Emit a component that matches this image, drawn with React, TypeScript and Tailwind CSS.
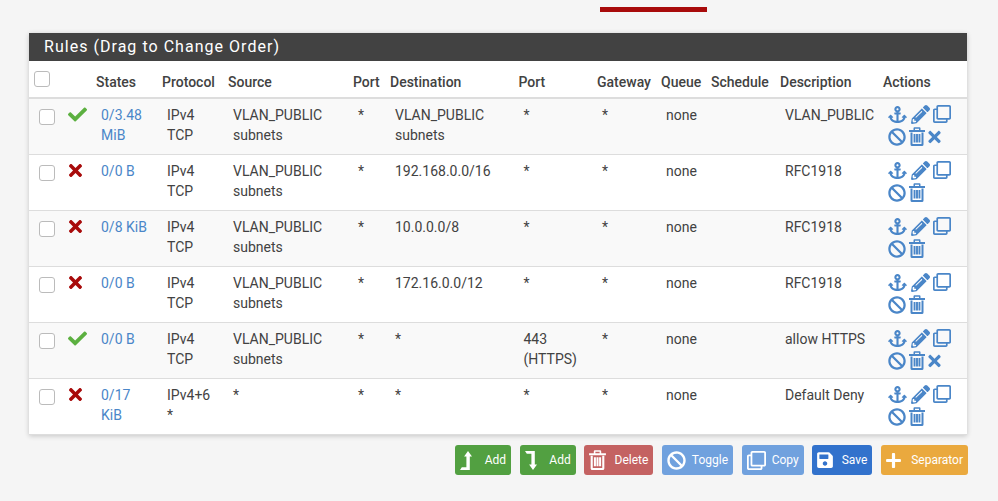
import { FaAnchor, FaPencilAlt, FaRegClone, FaBan, FaTimes, FaCheck, FaSave, FaPlus } from "react-icons/fa";

const rules = [
  { ok: true, states: "0/3.48 MiB", proto: ["IPv4", "TCP"], src: ["VLAN_PUBLIC", "subnets"], dest: ["VLAN_PUBLIC", "subnets"], port: "*", desc: "VLAN_PUBLIC", del: true },
  { ok: false, states: "0/0 B", proto: ["IPv4", "TCP"], src: ["VLAN_PUBLIC", "subnets"], dest: ["192.168.0.0/16"], port: "*", desc: "RFC1918", del: false },
  { ok: false, states: "0/8 KiB", proto: ["IPv4", "TCP"], src: ["VLAN_PUBLIC", "subnets"], dest: ["10.0.0.0/8"], port: "*", desc: "RFC1918", del: false },
  { ok: false, states: "0/0 B", proto: ["IPv4", "TCP"], src: ["VLAN_PUBLIC", "subnets"], dest: ["172.16.0.0/12"], port: "*", desc: "RFC1918", del: false },
  { ok: true, states: "0/0 B", proto: ["IPv4", "TCP"], src: ["VLAN_PUBLIC", "subnets"], dest: ["*"], port: "443 (HTTPS)", desc: "allow HTTPS", del: true },
  { ok: false, states: "0/17 KiB", proto: ["IPv4+6", "*"], src: ["*"], dest: ["*"], port: "*", desc: "Default Deny", del: false },
];

const heads = [
  ["", "w-[33px]"],
  ["", "w-[29px]"],
  ["States", "w-[66px]"],
  ["Protocol", "w-[66px]"],
  ["Source", "w-[125px]"],
  ["Port", "w-[37px]"],
  ["Destination", "w-[128.5px]"],
  ["Port", "w-[78.5px]"],
  ["Gateway", "w-[64px]"],
  ["Queue", "w-[50px]"],
  ["Schedule", "w-[69px]"],
  ["Description", "w-[103px]"],
  ["Actions", "w-[89px]"],
];

const cell = "border-b border-[#ddd] pl-[10px] pt-[6px]";

function Box({ className }: { className: string }) {
  return <span className={`block h-[16px] w-[16px] rounded-[3px] border border-[#bbb] bg-white ${className}`} />;
}

function Lines({ items }: { items: string[] }) {
  return (
    <>
      {items.map((t) => (
        <div key={t}>{t}</div>
      ))}
    </>
  );
}

function Trash({ className }: { className: string }) {
  return (
    <svg viewBox="0 0 16 19" className={className} fill="currentColor">
      <path d="M4.5 3V1.2Q4.5.3 5.5.3h5Q11.500.3 11.500 1.200V3H16v2H0V3zM6 3h4V1.700H6z" />
      <path d="M1.500 5.500h2V17h9V5.500h2V17.500Q14.500 19 13 19H3Q1.500 19 1.500 17.500z" />
      <path d="M4.600 7h1.900v8.500H4.600zM7.050 7h1.900v8.500H7.050zM9.500 7h1.900v8.500H9.500z" />
    </svg>
  );
}

function LevelUp({ className }: { className: string }) {
  return (
    <svg viewBox="0 0 12 19" className={className} fill="currentColor">
      <path d="M8 0 12 5.500H9.800V19H0L1.800 16.300H6.400V5.500H4.100z" />
    </svg>
  );
}

function LevelDown({ className }: { className: string }) {
  return (
    <svg viewBox="0 0 12 19" className={className} fill="currentColor">
      <path d="M8 19 12 13.500H9.800V0H0L1.800 2.700H6.400V13.500H4.100z" />
    </svg>
  );
}

function Btn({ icon, label, color, w }: { icon: React.ReactNode; label: string; color: string; w: string }) {
  return (
    <button className={`flex h-[30px] items-center justify-between rounded-[3px] pl-[5px] pr-[5px] text-[12px] text-white ${color} ${w}`}>
      {icon}
      <span>{label}</span>
    </button>
  );
}

export default function App() {
  return (
    <div className="h-[501px] w-[998px] overflow-hidden bg-[#f5f5f5] font-['Roboto',sans-serif] text-[14px] leading-[20px] text-[#424242]">
      <div className="ml-[600px] mt-[7px] h-[5px] w-[107px] bg-[#a80b0b]" />

      <div className="ml-[29px] mt-[21px] w-[938px] bg-white shadow-[0_1px_5px_rgba(0,0,0,0.2)]">
        <h2 className="h-[28px] bg-[#424242] pl-[15px] text-[16px] font-normal leading-[28px] tracking-[1.03px] text-white">
          Rules (Drag to Change Order)
        </h2>
        <table className="w-[938px] table-fixed border-separate border-spacing-0">
          <thead>
            <tr className="h-[38px]">
              {heads.map(([h, w], i) => (
                <th key={i} className={`${w} border-b-2 border-[#ddd] pl-[5px] pt-[6px] text-left align-middle font-medium`}>
                  {i === 0 ? <Box className="mb-[6px]" /> : h}
                </th>
              ))}
            </tr>
          </thead>
          <tbody>
            {rules.map((r, i) => (
              <tr key={i} className={`h-[56px] align-top ${i % 2 === 0 ? "bg-[#f9f9f9]" : "bg-white"}`}>
                <td className="border-b border-[#ddd] pl-[10px] pt-[10px]">
                  <Box className="" />
                </td>
                <td className="border-b border-[#ddd] pl-[6px] pt-[6px]">
                  {r.ok ? <FaCheck className="h-[19px] w-[19px] text-[#5cb040]" /> : <FaTimes className="h-[19px] w-[15px] text-[#a80b0b]" />}
                </td>
                <td className={`${cell} pr-[5px] text-[#4a86c8]`}>{r.states}</td>
                <td className={cell}><Lines items={r.proto} /></td>
                <td className={cell}><Lines items={r.src} /></td>
                <td className={cell}>*</td>
                <td className={cell}><Lines items={r.dest} /></td>
                <td className={cell}>{r.port}</td>
                <td className={cell}>*</td>
                <td className={cell}>none</td>
                <td className={cell}></td>
                <td className={cell}>{r.desc}</td>
                <td className={`${cell} text-[#4a86c8]`}>
                  <div className="flex h-[18px] items-center gap-[3px]">
                    <FaAnchor className="h-[19px] w-[19px]" />
                    <FaPencilAlt className="ml-[1px] h-[19px] w-[19px]" />
                    <FaRegClone className="h-[18px] w-[18px]" />
                  </div>
                  <div className="mt-[4px] flex h-[19px] items-center gap-[3px]">
                    <FaBan className="h-[18px] w-[18px]" />
                    <Trash className="h-[19px] w-[16px]" />
                    {r.del && <FaTimes className="-ml-[1px] h-[18px] w-[15px]" />}
                  </div>
                </td>
              </tr>
            ))}
          </tbody>
        </table>
      </div>

      <div className="mr-[30px] mt-[10px] flex justify-end gap-[8.67px]">
        <Btn w="w-[56px]" color="bg-[#52a041]" label="Add" icon={<LevelUp className="h-[19px] w-[12px]" />} />
        <Btn w="w-[56px]" color="bg-[#52a041]" label="Add" icon={<LevelDown className="h-[19px] w-[12px]" />} />
        <Btn w="w-[69px]" color="bg-[#c46262]" label="Delete" icon={<Trash className="h-[20px] w-[17px]" />} />
        <Btn w="w-[71px]" color="bg-[#70a1de]" label="Toggle" icon={<FaBan className="h-[19px] w-[19px]" />} />
        <Btn w="w-[62px]" color="bg-[#70a1de]" label="Copy" icon={<FaRegClone className="h-[19px] w-[19px]" />} />
        <Btn w="w-[60px]" color="bg-[#3272cc]" label="Save" icon={<FaSave className="-ml-[1px] h-[18px] w-[18px]" />} />
        <Btn w="w-[87px]" color="bg-[#eaa93e]" label="Separator" icon={<FaPlus className="-ml-[1px] h-[17px] w-[17px]" />} />
      </div>
    </div>
  );
}
